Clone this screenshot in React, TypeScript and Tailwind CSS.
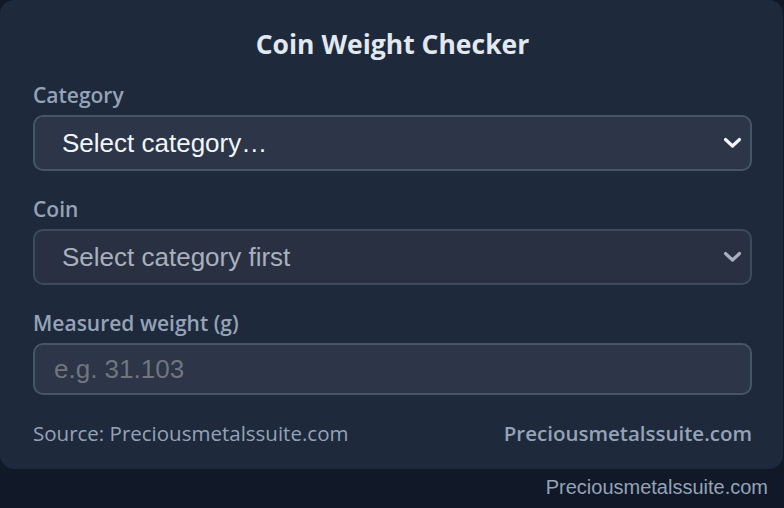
const Chevron = ({ color }: { color: string }) => (
  <svg width="19" height="12" viewBox="0 0 19 12" fill="none">
    <path d="M2.5 2.5L9.5 9L16.5 2.5" stroke={color} strokeWidth="3.2" strokeLinecap="round" strokeLinejoin="round" />
  </svg>
);

const App = () => {
  return (
    <div className="w-[784px] h-[508px] bg-[#111827] flex flex-col font-['Open_Sans',sans-serif]">
      {/* card */}
      <div className="w-[783px] h-[469px] bg-[#1e293b] rounded-[14px] pl-[33px] pr-[31px] pt-[29px] flex flex-col">
        <h1 className="text-center text-[26.5px] leading-[30px] font-bold text-[#e2e8f0]">
          Coin Weight Checker
        </h1>

        <label className="mt-[22px] text-[21px] leading-[28px] font-semibold text-[#94a3b8]">
          Category
        </label>
        <div className="mt-[6px] h-[56px] rounded-[10px] border-2 border-[#475569] bg-[#2d3548] flex items-center justify-between pl-[27px] pr-[8px]">
          <span className="font-['Liberation_Sans',sans-serif] text-[26px] text-[#f1f5f9]">
            Select category…
          </span>
          <Chevron color="#f1f5f9" />
        </div>

        <label className="mt-[24px] text-[21px] leading-[28px] font-semibold text-[#94a3b8]">
          Coin
        </label>
        <div className="mt-[6px] h-[56px] rounded-[10px] border-2 border-[#3e4a5e] bg-[#283042] flex items-center justify-between pl-[27px] pr-[8px]">
          <span className="font-['Liberation_Sans',sans-serif] text-[26px] text-[#a8b0bd]">
            Select category first
          </span>
          <Chevron color="#a8b0bd" />
        </div>

        <label className="mt-[24px] text-[21px] leading-[28px] font-semibold text-[#94a3b8]">
          Measured weight (g)
        </label>
        <div className="mt-[6px] h-[52px] rounded-[10px] border-2 border-[#475569] bg-[#2d3548] flex items-center pl-[19px]">
          <span className="font-['Liberation_Sans',sans-serif] text-[26px] text-[#71757c]">
            e.g. 31.103
          </span>
        </div>

        <div className="mt-[24px] flex justify-between items-center text-[20.5px] leading-[28px] text-[#94a3b8]">
          <span>Source: Preciousmetalssuite.com</span>
          <span className="font-semibold">Preciousmetalssuite.com</span>
        </div>
      </div>
      <div className="flex justify-end pr-[16px] pt-[6px]">
        <span className="font-['Liberation_Sans',sans-serif] text-[20px] leading-[24px] text-[#94a3b8]">
          Preciousmetalssuite.com
        </span>
      </div>
    </div>
  );
};

export default App;
